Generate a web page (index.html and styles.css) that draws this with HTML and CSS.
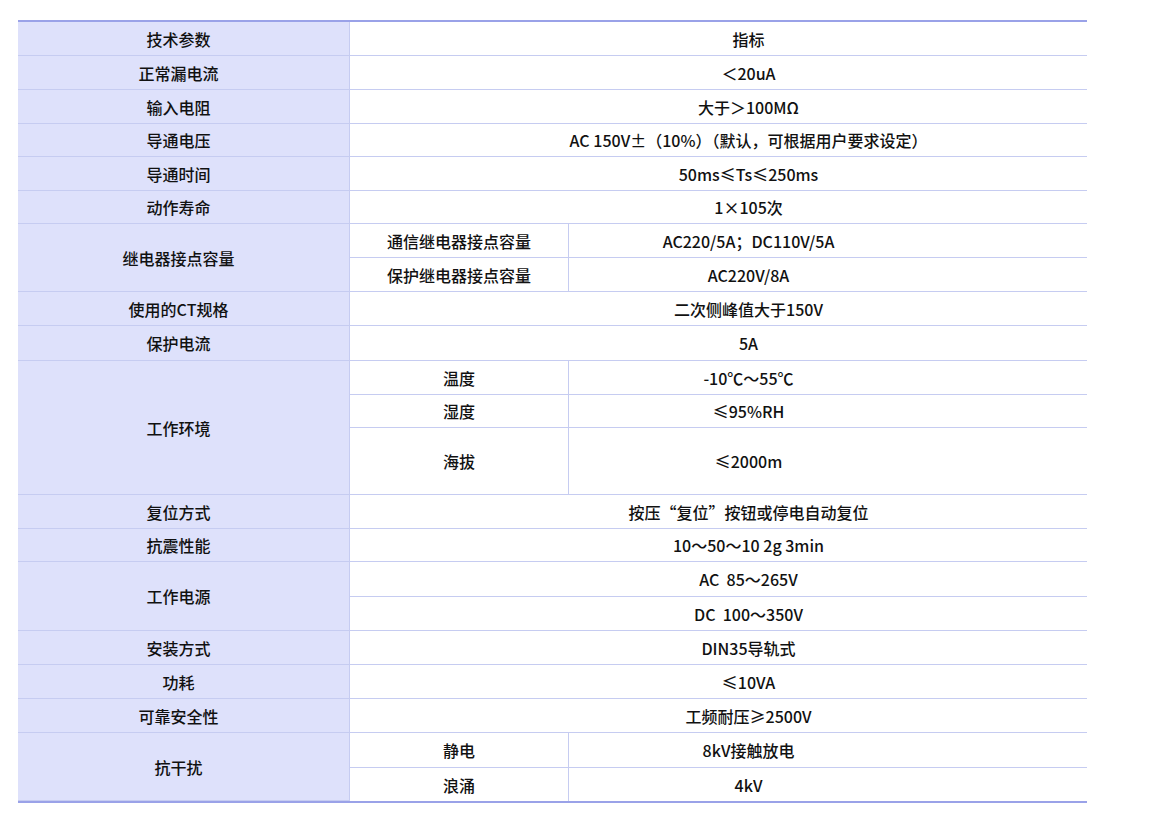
FILE: index.html
```html
<!DOCTYPE html>
<html lang="zh-CN">
<head>
<meta charset="utf-8">
<title>技术参数</title>
<link rel="stylesheet" href="styles.css">
</head>
<body>
<table class="spec">
  <colgroup>
    <col class="c1"><col class="c2"><col class="c3">
  </colgroup>
  <tbody>
    <tr class="h34"><td class="lab">技术参数</td><td class="val wide" colspan="2">指标</td></tr>
    <tr class="h34"><td class="lab">正常漏电流</td><td class="val wide" colspan="2">＜20uA</td></tr>
    <tr class="h34"><td class="lab">输入电阻</td><td class="val wide" colspan="2">大于＞100MΩ</td></tr>
    <tr class="h33"><td class="lab">导通电压</td><td class="val wide" colspan="2">AC 150V±（10%）（默认，可根据用户要求设定）</td></tr>
    <tr class="h34"><td class="lab">导通时间</td><td class="val wide" colspan="2">50ms≤Ts≤250ms</td></tr>
    <tr class="h33"><td class="lab">动作寿命</td><td class="val wide" colspan="2">1×105次</td></tr>
    <tr class="h34"><td class="lab" rowspan="2">继电器接点容量</td><td class="sub">通信继电器接点容量</td><td class="val narrow">AC220/5A；DC110V/5A</td></tr>
    <tr class="h34"><td class="sub">保护继电器接点容量</td><td class="val narrow">AC220V/8A</td></tr>
    <tr class="h34"><td class="lab">使用的CT规格</td><td class="val wide" colspan="2">二次侧峰值大于150V</td></tr>
    <tr class="h35"><td class="lab">保护电流</td><td class="val wide" colspan="2">5A</td></tr>
    <tr class="h34"><td class="lab" rowspan="3">工作环境</td><td class="sub">温度</td><td class="val narrow">-10℃～55℃</td></tr>
    <tr class="h33"><td class="sub">湿度</td><td class="val narrow">≤95%RH</td></tr>
    <tr class="h67"><td class="sub">海拔</td><td class="val narrow">≤2000m</td></tr>
    <tr class="h34"><td class="lab">复位方式</td><td class="val wide" colspan="2">按压“复位”按钮或停电自动复位</td></tr>
    <tr class="h33"><td class="lab">抗震性能</td><td class="val wide" colspan="2">10～50～10&nbsp;2g&nbsp;3min</td></tr>
    <tr class="h35"><td class="lab" rowspan="2">工作电源</td><td class="val wide" colspan="2">AC&nbsp;&nbsp;85～265V</td></tr>
    <tr class="h34"><td class="val wide" colspan="2">DC&nbsp;&nbsp;100～350V</td></tr>
    <tr class="h34"><td class="lab">安装方式</td><td class="val wide" colspan="2">DIN35导轨式</td></tr>
    <tr class="h34"><td class="lab">功耗</td><td class="val wide" colspan="2">≤10VA</td></tr>
    <tr class="h34"><td class="lab">可靠安全性</td><td class="val wide" colspan="2">工频耐压≥2500V</td></tr>
    <tr class="h35"><td class="lab" rowspan="2">抗干扰</td><td class="sub">静电</td><td class="val narrow">8kV接触放电</td></tr>
    <tr class="h33 last"><td class="sub">浪涌</td><td class="val narrow">4kV</td></tr>
  </tbody>
</table>
</body>
</html>
```

FILE: styles.css
```css
html, body {
  margin: 0;
  padding: 0;
  background: #ffffff;
}

body {
  font-family: "Noto Sans CJK SC", "Noto Sans", sans-serif;
  font-size: 16px;
  color: #111111;
}

.spec {
  margin: 20px 0 0 18px;
  width: 1069px;
  table-layout: fixed;
  border-collapse: separate;
  border-spacing: 0;
  border-top: 2px solid #9aa2e8;
  border-bottom: 2px solid #9aa2e8;
}

.c1 { width: 332px; }
.c2 { width: 219px; }
.c3 { width: 518px; }

.spec td {
  box-sizing: border-box;
  padding: 0;
  border-bottom: 1px solid #c6ccf1;
  text-align: center;
  vertical-align: middle;
  line-height: 20px;
  white-space: nowrap;
  font-weight: 500;
}

.spec tr.last td { border-bottom: none; }

.lab {
  background: #dee1fb;
  border-right: 1px solid #c6ccf1;
  padding-right: 10px !important;
}

.sub {
  border-right: 1px solid #c6ccf1;
}

.val.wide {
  padding-left: 60px !important;
}

.val.narrow {
  padding-right: 159px !important;
}

.h33 { height: 33px; }
.h34 { height: 34px; }
.h35 { height: 35px; }
.h67 { height: 67px; }
```
